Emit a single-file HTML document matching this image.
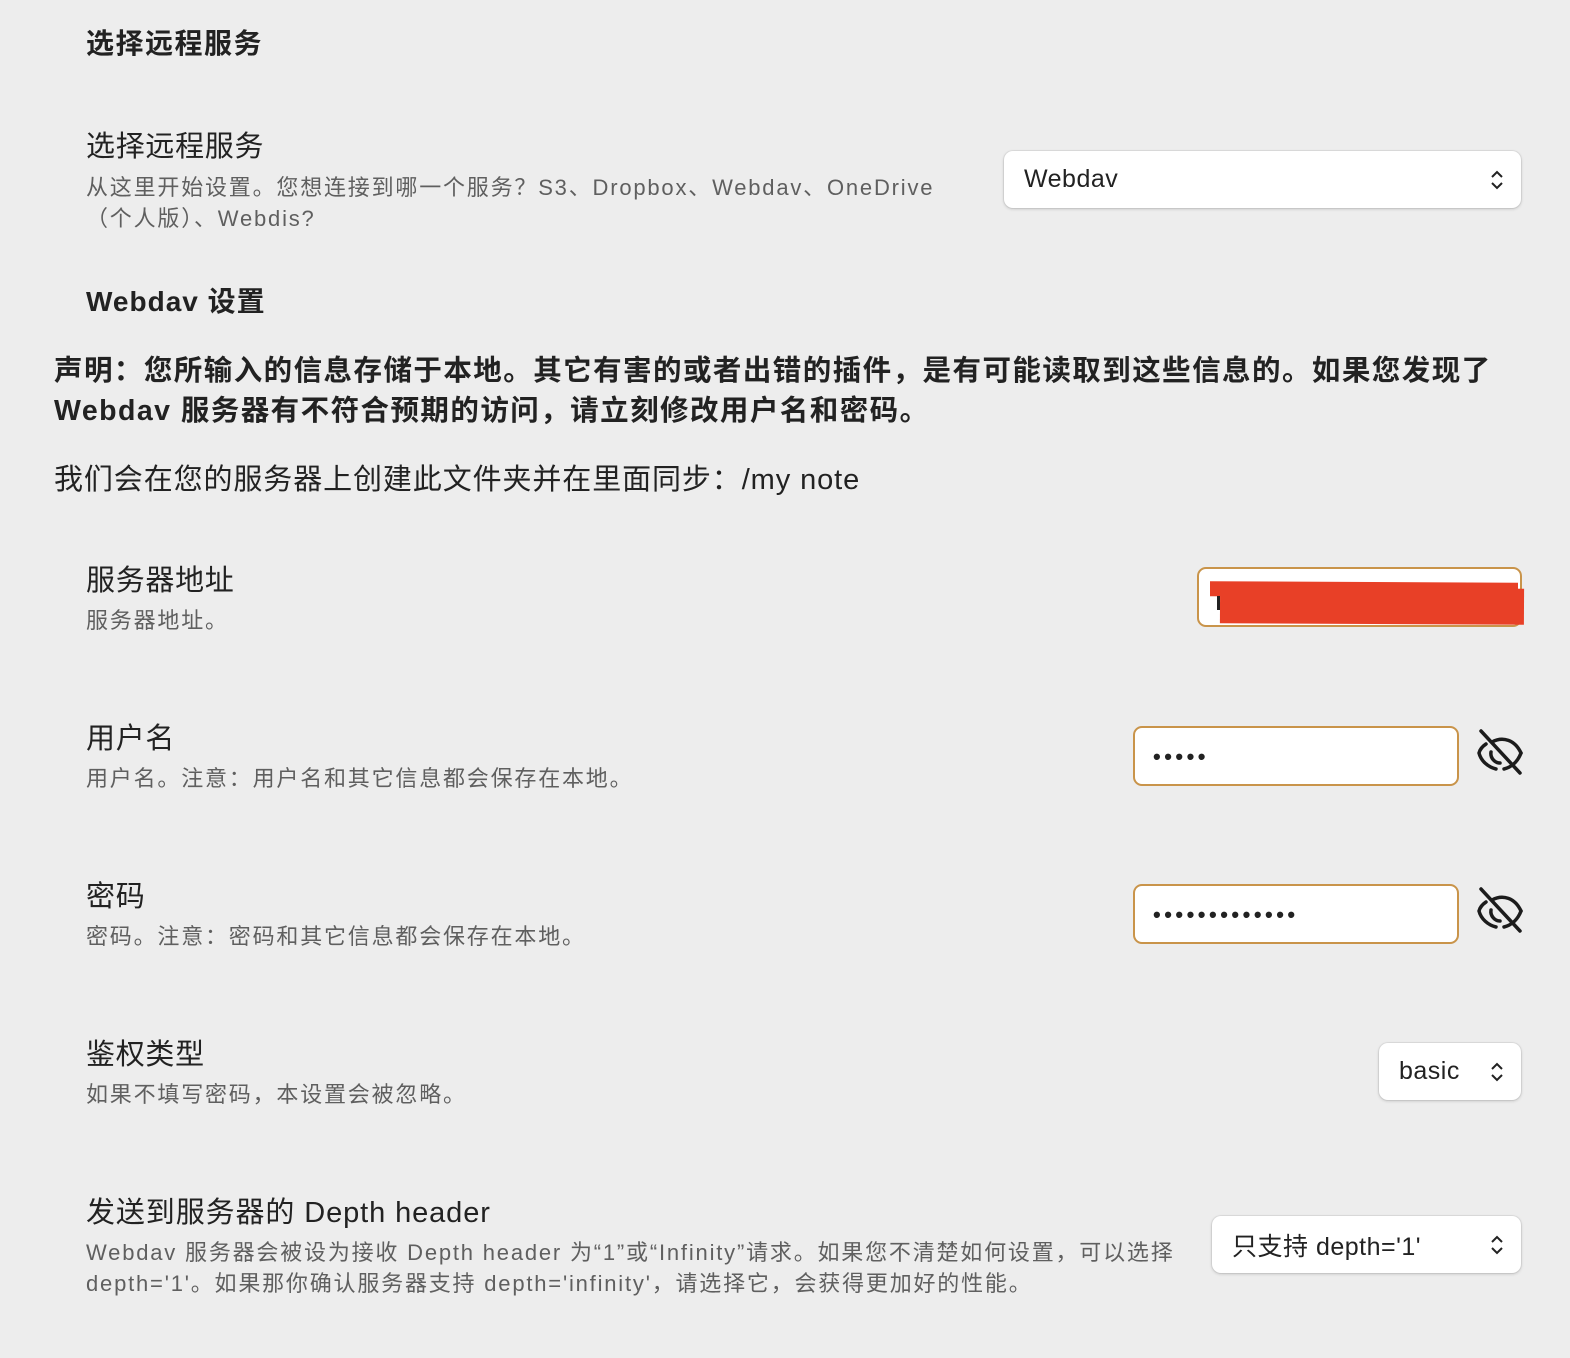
<!DOCTYPE html>
<html><head><meta charset="utf-8"><style>
body{margin:0;width:1570px;height:1358px;background:#ededed;font-family:"Liberation Sans","Noto Sans CJK SC",sans-serif;color:#222;position:relative;overflow:hidden}
.a{position:absolute;white-space:nowrap}
.h{font-weight:bold;font-size:28px;letter-spacing:1.5px}
.l{font-size:29px;color:#222;letter-spacing:0.7px}
.d{font-size:22px;color:#5f5f5f;line-height:31px;letter-spacing:1.8px}
.sel{position:absolute;background:#fff;border-radius:9px;box-shadow:0 1px 3px rgba(0,0,0,.18),0 0 0 1px rgba(0,0,0,.05);font-size:25px;color:#222;box-sizing:border-box;padding-left:20px;display:flex;align-items:center;letter-spacing:0.5px}
.sel svg{position:absolute;right:16px;top:50%;margin-top:-11px}
.inp{position:absolute;background:#fff;border:2px solid #c9944a;border-radius:9px;box-sizing:border-box}
.dots{position:absolute;left:18px;top:16px;font-size:22px;letter-spacing:3.5px;font-weight:bold}
</style></head><body>
<div class="a h" style="left:86px;top:22px">选择远程服务</div>
<div class="a l" style="left:86px;top:123px">选择远程服务</div>
<div class="a d" style="left:86px;top:172px">从这里开始设置。您想连接到哪一个服务？S3、Dropbox、Webdav、OneDrive<br>（个人版）、Webdis?</div>
<div class="sel" style="left:1004px;top:151px;width:517px;height:57px">Webdav<svg width="16" height="22" viewBox="0 0 16 22"><path d="M3 8l5-5 5 5M3 14l5 5 5-5" fill="none" stroke="#222" stroke-width="2"/></svg></div>
<div class="a h" style="left:86px;top:280px;letter-spacing:1px">Webdav 设置</div>
<div class="a" style="left:54px;top:351px;font-size:28.5px;font-weight:bold;line-height:40px;letter-spacing:1.45px">声明：您所输入的信息存储于本地。其它有害的或者出错的插件，是有可能读取到这些信息的。如果您发现了<br>Webdav 服务器有不符合预期的访问，请立刻修改用户名和密码。</div>
<div class="a" style="left:54px;top:456px;font-size:29px;letter-spacing:0.9px">我们会在您的服务器上创建此文件夹并在里面同步：/my note</div>

<div class="a l" style="left:86px;top:557px">服务器地址</div>
<div class="a d" style="left:86px;top:605px">服务器地址。</div>
<div class="inp" style="left:1197px;top:567px;width:325px;height:60px"></div>
<div class="a" style="left:1210px;top:582px;width:308px;height:15px;background:#e84027;transform:skewY(0.3deg)"></div>
<div class="a" style="left:1220px;top:588px;width:304px;height:36px;background:#e84027;transform:rotate(0.3deg)"></div>
<div class="a" style="left:1217px;top:596px;width:3px;height:14px;background:#222"></div>

<div class="a l" style="left:86px;top:715px">用户名</div>
<div class="a d" style="left:86px;top:763px">用户名。注意：用户名和其它信息都会保存在本地。</div>
<div class="inp" style="left:1133px;top:726px;width:326px;height:60px"><span class="dots">•••••</span></div>
<svg class="a" style="left:1470px;top:725px" width="60" height="55" viewBox="0 0 60 55"><g fill="none" stroke="#1c1c1c" stroke-width="3.5" stroke-linecap="round"><path d="M22 17C33 11 45 15 51 28"/><path d="M51 28C48 36 42 42 34 44"/><path d="M26 44C18 42 11 36 9 28C10 24 13 21 16 19"/><path d="M11 6L50 48"/><path d="M21 27C20 33 25 38 30 38"/></g></svg>

<div class="a l" style="left:86px;top:873px">密码</div>
<div class="a d" style="left:86px;top:921px">密码。注意：密码和其它信息都会保存在本地。</div>
<div class="inp" style="left:1133px;top:884px;width:326px;height:60px"><span class="dots">•••••••••••••</span></div>
<svg class="a" style="left:1470px;top:883px" width="60" height="55" viewBox="0 0 60 55"><g fill="none" stroke="#1c1c1c" stroke-width="3.5" stroke-linecap="round"><path d="M22 17C33 11 45 15 51 28"/><path d="M51 28C48 36 42 42 34 44"/><path d="M26 44C18 42 11 36 9 28C10 24 13 21 16 19"/><path d="M11 6L50 48"/><path d="M21 27C20 33 25 38 30 38"/></g></svg>

<div class="a l" style="left:86px;top:1031px">鉴权类型</div>
<div class="a d" style="left:86px;top:1079px">如果不填写密码，本设置会被忽略。</div>
<div class="sel" style="left:1379px;top:1043px;width:142px;height:57px">basic<svg width="16" height="22" viewBox="0 0 16 22"><path d="M3 8l5-5 5 5M3 14l5 5 5-5" fill="none" stroke="#222" stroke-width="2"/></svg></div>

<div class="a l" style="left:86px;top:1189px;letter-spacing:0.9px">发送到服务器的 Depth header</div>
<div class="a d" style="left:86px;top:1237px">Webdav 服务器会被设为接收 Depth header 为“1”或“Infinity”请求。如果您不清楚如何设置，可以选择<br>depth='1'。如果那你确认服务器支持 depth='infinity'，请选择它，会获得更加好的性能。</div>
<div class="sel" style="left:1212px;top:1216px;width:309px;height:57px">只支持 depth='1'<svg width="16" height="22" viewBox="0 0 16 22"><path d="M3 8l5-5 5 5M3 14l5 5 5-5" fill="none" stroke="#222" stroke-width="2"/></svg></div>
</body></html>
